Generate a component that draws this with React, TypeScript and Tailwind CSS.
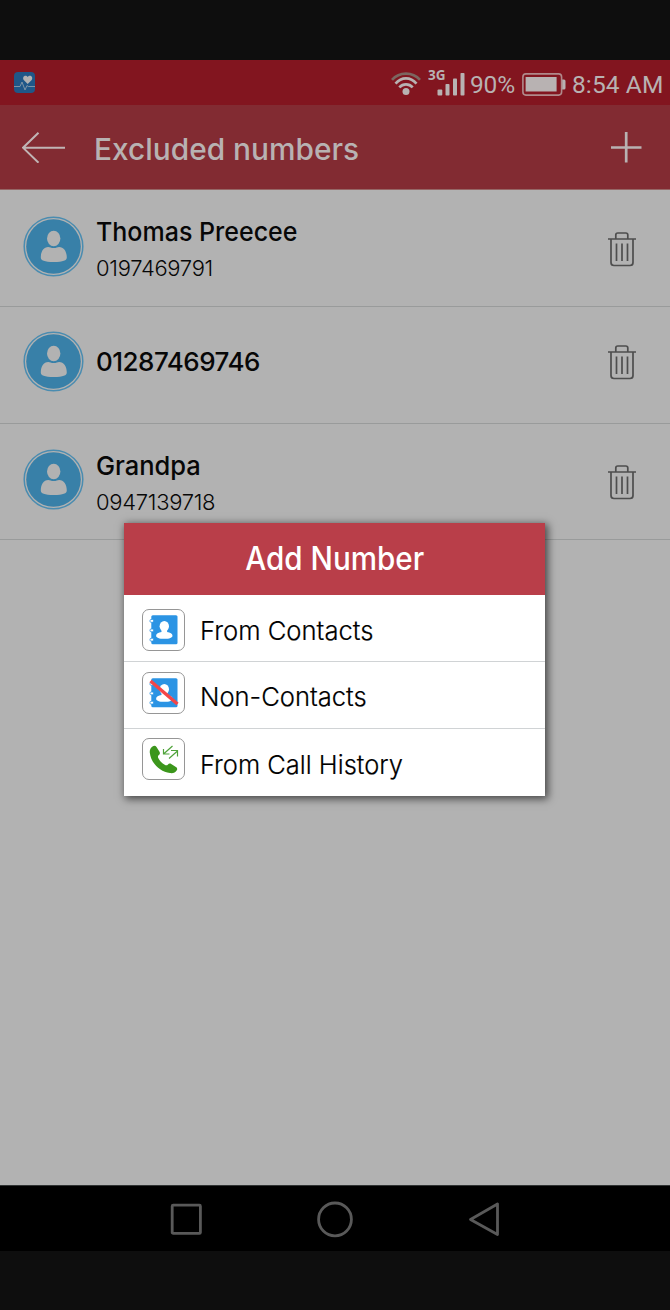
import React from "react";

function HealthIcon() {
  return (
    <svg width="21" height="21" viewBox="0 0 21 21" fill="none">
      <rect width="21" height="21" rx="4" fill="#1f5788" />
      <path d="M13.700 12 9.700 8C8.400 6.200 9.500 3.800 11.400 3.800c1 0 1.800.5 2.300 1.300.5-.8 1.300-1.300 2.300-1.300 1.900 0 3 2.400 1.700 4.200Z" fill="#b2b2b2" />
      <path d="M0 14.500h6l2-4.500 3 8 2-4.500 1.200 1H21" stroke="#7d93a6" strokeWidth="1" />
    </svg>
  );
}

function WifiIcon() {
  return (
    <svg width="30" height="24" viewBox="0 0 30 24" fill="none" strokeWidth="2.700">
      <path d="M1 7.800C8.500-.4 21.500-.4 29 7.800" stroke="#7c6660" />
      <path d="M4.500 11.600C10.500 4.700 19.500 4.700 25.500 11.600M8.300 15.300C12 11.300 18 11.300 21.700 15.300" stroke="#b8b2b2" />
      <circle cx="15" cy="19.500" r="3.500" fill="#b8b2b2" />
    </svg>
  );
}

function SignalIcon() {
  return (
    <svg width="28" height="23" viewBox="0 0 28 23" fill="#b8b2b2">
      <rect x=".5" y="16.500" width="4.800" height="6" rx="1" />
      <rect x="8.500" y="11" width="4" height="11.500" rx=".8" />
      <rect x="16" y="5.500" width="4" height="17" rx=".8" />
      <rect x="23.500" y="0" width="4" height="22.500" rx=".8" />
    </svg>
  );
}

function BatteryIcon() {
  return (
    <svg width="44" height="23" viewBox="0 0 44 23" fill="none">
      <rect x=".9" y=".9" width="38.700" height="21.200" rx="3" stroke="#b0898b" strokeWidth="1.600" />
      <rect x="3.600" y="4" width="31" height="14.500" fill="#b8b2b2" />
      <path d="M40.200 6.500h1.800q1.500 0 1.500 1.500v7q0 1.500-1.500 1.500h-1.800Z" fill="#b8b2b2" />
    </svg>
  );
}

function Avatar() {
  return (
    <svg className="shrink-0" width="61" height="61" viewBox="0 0 61 61" fill="none">
      <circle cx="30.500" cy="30.500" r="29.300" stroke="#4a8cb0" strokeWidth="1.500" />
      <circle cx="30.500" cy="30.500" r="27.300" fill="#3880a8" />
      <ellipse cx="30.700" cy="22.500" rx="6.700" ry="7.700" fill="#b2b2b2" />
      <path d="M17.800 41.500c0-6 2.800-10.500 7.500-10.500 1.500 0 2.800 1.100 5.400 1.100s3.900-1.100 5.400-1.100c4.700 0 7.700 4.500 7.700 10.500 0 2.800-3.500 4.500-13 4.500s-13-1.700-13-4.500Z" fill="#b2b2b2" />
    </svg>
  );
}

function TrashIcon() {
  return (
    <svg className="shrink-0" width="30" height="36" viewBox="0 0 30 36" fill="none" stroke="#4e4e4e" strokeWidth="1.700">
      <path d="M1 8h28M8.800 7.500V4q0-2 2-2h8q2 0 2 2v3.500M4 8v23.500q0 3 3 3h16q3 0 3-3V8" />
      <path d="M9.500 12.500v17.500M15 12.500v17.500M20.500 12.500v17.500" />
    </svg>
  );
}

function ContactBook({ crossed = false }: { crossed?: boolean }) {
  return (
    <svg className="shrink-0" width="43" height="43" viewBox="0 0 43 43" fill="none">
      <rect x="9.300" y="6.300" width="26.200" height="29" rx="1.500" fill="#2b94e4" />
      <g fill="#fff" stroke="#2b94e4" strokeWidth=".8">
        <rect x="8" y="10.500" width="3.500" height="2.800" rx="1" />
        <rect x="8" y="20" width="3.500" height="2.800" rx="1" />
        <rect x="8" y="29.300" width="3.500" height="2.800" rx="1" />
      </g>
      <ellipse cx="22.300" cy="17.300" rx="4.700" ry="5.300" fill="#fff" />
      <path d="M19.500 20h5.600v3c3 .5 5.400 1.500 5.400 3.700 0 2-3 3.100-8.200 3.100s-8.200-1.100-8.200-3.100c0-2.200 2.400-3.200 5.400-3.700Z" fill="#fff" />
      {crossed && <path d="M8.500 9 35.500 32" stroke="#f44648" strokeWidth="3.400" />}
    </svg>
  );
}

function CallHistory() {
  return (
    <svg className="shrink-0" width="43" height="43" viewBox="0 0 43 43" fill="none">
      <path d="M10.500 8.500C12 7.300 13.500 7.500 14.500 9l3 4.800c.8 1.400.4 2.300-.6 3.200-1.200 1-1.200 1.800-.5 3.200 1.500 3 3.500 4.900 6.300 6.600 1.400.8 2.300.7 3.300-.4.900-1 1.900-1.200 3.200-.4l4.700 3c1.300.8 1.700 1.800.9 3.300-1.300 2.400-4 3.300-6.800 2.800C17.500 33.500 9 25 7.800 14.800c-.3-2.800.7-4.800 2.700-6.300Z" fill="#3c961c" />
      <path d="M30.500 8 21.800 15.800M21.500 11v5h6M27 20.500l8.500-7.500M29 12.500h6.500v6" stroke="#4fa33a" strokeWidth="1.200" />
    </svg>
  );
}

const people = [
  { name: "Thomas Preecee", number: "0197469791", row: "h-[117px]", nameStyle: "mt-[26px] scale-x-[0.962]", icon: "mt-[26px]", trash: "mt-[41px]" },
  { name: "01287469746", row: "h-[117px]", nameStyle: "mt-[39px] tracking-[-0.5px]", icon: "mt-[24px]", trash: "mt-[37px]" },
  { name: "Grandpa", number: "0947139718", row: "h-[116px]", nameStyle: "mt-[26px] scale-x-[0.98]", icon: "mt-[25px]", trash: "mt-[40px]" },
];

const options = [
  { label: "From Contacts", row: "h-[67px]", box: "mt-[14px]", text: "mt-[16px] scale-x-[0.985]", icon: <ContactBook /> },
  { label: "Non-Contacts", row: "h-[67px]", box: "mt-[10px]", text: "mt-[15px] scale-x-[0.983]", icon: <ContactBook crossed /> },
  { label: "From Call History", row: "h-[67px]", box: "mt-[9px]", text: "mt-[16px] scale-x-[0.979]", icon: <CallHistory /> },
];

export default function App() {
  return (
    <div className="relative flex h-[1310px] w-[670px] flex-col overflow-hidden bg-[#0e0e0e] pt-[60px] font-['Inter',sans-serif]">
      <div className="flex h-[45px] shrink-0 items-start bg-[#82151f] pl-[14px] font-['Roboto',sans-serif] text-[24.500px] text-[#b8b2b2]">
        <div className="mt-[12px]"><HealthIcon /></div>
        <div className="mt-[12px] ml-[356px]"><WifiIcon /></div>
        <div className="relative mt-[13px] ml-[16px]">
          <span className="absolute -top-[5px] -left-[9px] font-['Open_Sans',sans-serif] text-[13.500px] leading-[14px] font-bold">3G</span>
          <SignalIcon />
        </div>
        <span className="mt-[11px] ml-[5px] w-[52px] leading-[28px] tracking-[-0.2px]">90%</span>
        <div className="mt-[13px]"><BatteryIcon /></div>
        <span className="mt-[11px] ml-[6px] leading-[28px] tracking-[0.1px] whitespace-nowrap">8:54 AM</span>
      </div>

      <header className="flex h-[85px] shrink-0 items-center border-b border-[#956665] bg-[#822b32] pr-[28px] pl-[22px] text-[#b8b2b2]">
        <svg width="43" height="32" viewBox="0 0 43 32" fill="none" stroke="#c0b5b5" strokeWidth="2">
          <path d="M43 16.700H1M16.500 1.700 1 16.700l15.500 15" />
        </svg>
        <h1 className="mt-[4px] ml-[29px] flex-1 origin-left scale-x-[0.995] text-[30px] font-medium whitespace-nowrap">Excluded numbers</h1>
        <svg width="31" height="32" viewBox="0 0 31 32" fill="none" stroke="#b8b2b2" strokeWidth="2.700">
          <path d="M0 16.500h30.500M15.200 1v30.500" />
        </svg>
      </header>

      <main className="flex h-[995px] shrink-0 flex-col bg-[#b2b2b2] text-[#070707]">
        {people.map((p) => (
          <div key={p.name} className={`flex shrink-0 items-start border-b border-[#999b9b] pr-[33px] pl-[23px] ${p.row}`}>
            <div className={p.icon}><Avatar /></div>
            <div className="flex flex-1 flex-col items-start pl-[12px] whitespace-nowrap">
              <span className={`origin-left text-[26px] leading-[32px] font-medium ${p.nameStyle}`}>{p.name}</span>
              {p.number && <span className="mt-[5px] text-[22px] leading-[30px] font-light tracking-[-0.3px]">{p.number}</span>}
            </div>
            <div className={p.trash}><TrashIcon /></div>
          </div>
        ))}
      </main>

      <nav className="flex h-[66px] shrink-0 items-center border-t border-[#303333] bg-black pl-[170px]">
        <svg width="330" height="38" viewBox="0 0 330 38" fill="none" stroke="#595959" strokeWidth="2.800" strokeLinejoin="round">
          <rect x="2.200" y="5.200" width="28.200" height="28.200" rx="1" />
          <circle cx="165" cy="19.400" r="16.400" />
          <path d="M300.500 19.500 327.500 4v30.500Z" />
        </svg>
      </nav>

      <section className="absolute top-[523px] left-[124px] flex w-[421px] flex-col bg-white text-black shadow-[2px_2px_8px_1px_rgba(0,0,0,0.6)]">
        <h2 className="flex h-[72px] items-center justify-center bg-[#b93e49] text-[32px] font-medium text-white">
          <span className="scale-x-[0.925]">Add Number</span>
        </h2>
        {options.map((o, i) => (
          <div key={o.label} className={`flex items-start pl-[18px] ${o.row} ${i < 2 ? "border-b border-[#d0d3d5]" : ""}`}>
            <div className={`flex h-[42px] w-[43px] shrink-0 items-center justify-center rounded-[7px] border border-[#969696] ${o.box}`}>{o.icon}</div>
            <span className={`ml-[15px] origin-left text-[26px] leading-[40px] font-light whitespace-nowrap [-webkit-text-stroke:0.2px_black] ${o.text}`}>{o.label}</span>
          </div>
        ))}
      </section>
    </div>
  );
}
